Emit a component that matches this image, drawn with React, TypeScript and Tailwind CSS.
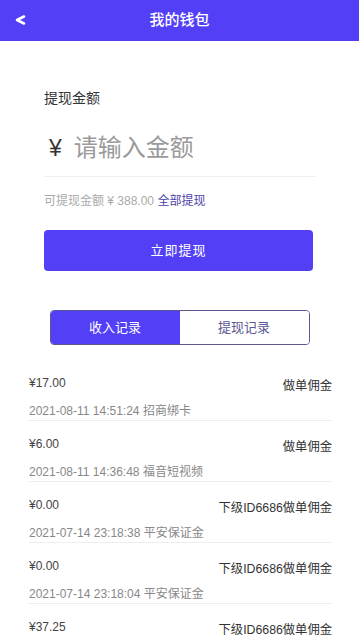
import { useState } from "react";

const font = { fontFamily: '"Liberation Sans", "Noto Sans CJK SC", sans-serif' };

interface Record {
  amount: string;
  title: string;
  time: string;
  source: string;
}

const records: Record[] = [
  { amount: "¥17.00", title: "做单佣金", time: "2021-08-11 14:51:24", source: "招商绑卡" },
  { amount: "¥6.00", title: "做单佣金", time: "2021-08-11 14:36:48", source: "福音短视频" },
  { amount: "¥0.00", title: "下级ID6686做单佣金", time: "2021-07-14 23:18:38", source: "平安保证金" },
  { amount: "¥0.00", title: "下级ID6686做单佣金", time: "2021-07-14 23:18:04", source: "平安保证金" },
  { amount: "¥37.25", title: "下级ID6686做单佣金", time: "2021-07-14 23:10:12", source: "平安保证金" },
];

function BackIcon() {
  return (
    <svg width="12" height="12" viewBox="0 0 12 12" fill="none">
      <path d="M10 2.5 3 6l7 3.5" stroke="white" strokeWidth="2.6" strokeLinejoin="round" strokeLinecap="round" />
    </svg>
  );
}

export default function App() {
  const [tab, setTab] = useState(0);
  return (
    <div className="h-[640px] w-[359px] overflow-hidden bg-white" style={font}>
      <header className="relative flex h-[41px] items-center justify-center bg-[#5340f6]">
        <span className="absolute left-[14px] top-[14px]">
          <BackIcon />
        </span>
        <span className="text-[15px] font-medium text-white">我的钱包</span>
      </header>

      <section className="px-[44px] pt-[47px]">
        <div className="text-[14px] leading-5 text-[#333]">提现金额</div>
        <div className="mt-[22px] flex h-9 items-center">
          <span className="ml-[5px] text-[23px] text-[#333]">¥</span>
          <span className="ml-[12px] text-[24px] text-[#9a9a9a]">请输入金额</span>
        </div>
        <div className="mt-[10px] h-px w-[272px] bg-[#eeeeee]" />
        <div className="mt-[16px] text-[12px] leading-4 text-[#aaaaaa]">
          可提现金额 ¥ 388.00 <span className="text-[#4b3fa8]">全部提现</span>
        </div>
        <button className="mt-[21px] flex h-[41px] w-[269px] items-center justify-center rounded-[4px] bg-[#5340f6] text-[13px] tracking-[1px] text-white">
          立即提现
        </button>
      </section>

      <div className="mt-[39px] flex justify-center">
        <div className="flex h-[35px] w-[260px] overflow-hidden rounded-[4px] border border-[#5b5790]">
          {["收入记录", "提现记录"].map((t, i) => (
            <button
              key={t}
              onClick={() => setTab(i)}
              className={
                tab === i
                  ? "flex flex-1 items-center justify-center bg-[#5340f6] text-[13px] text-white"
                  : "flex flex-1 items-center justify-center bg-white text-[13px] text-[#5b5790]"
              }
            >
              {t}
            </button>
          ))}
        </div>
      </div>

      <ul className="mt-[15px] pl-[29px] pr-[27px]">
        {records.map((r, i) => (
          <li key={i} className="h-[61px] border-b border-[#eeeeee] pt-[14px]">
            <div className="flex h-[18px] items-start justify-between">
              <span className="text-[12px] leading-[18px] text-[#444]">{r.amount}</span>
              <span className="mt-[3px] text-[12.3px] leading-[18px] text-[#333]">{r.title}</span>
            </div>
            <div className="mt-[11px] h-4 text-[12px] leading-4 text-[#888]">
              {r.time} {r.source}
            </div>
          </li>
        ))}
      </ul>
    </div>
  );
}
